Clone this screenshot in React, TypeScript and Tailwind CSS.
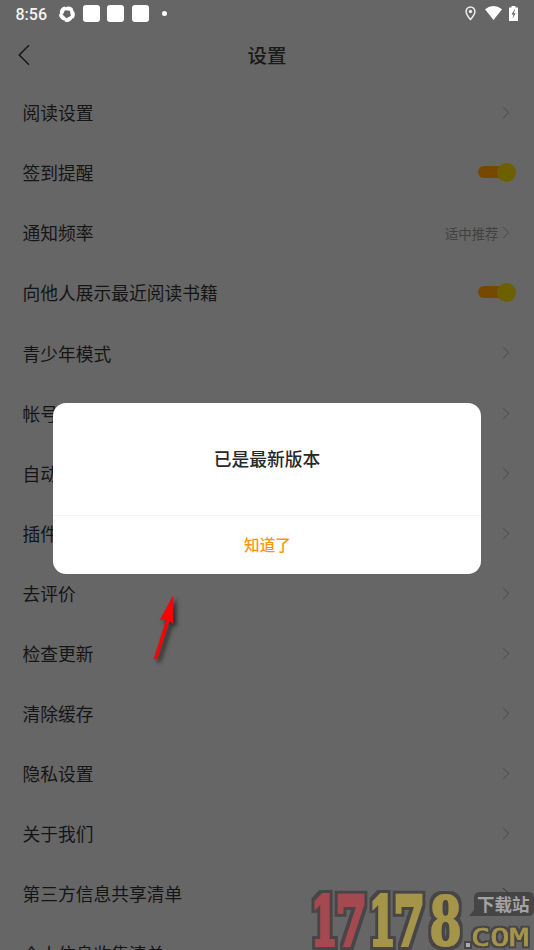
import React from 'react';

type Row = { label: string; toggle?: boolean; value?: string };

const rows: Row[] = [
  { label: '阅读设置' },
  { label: '签到提醒', toggle: true },
  { label: '通知频率', value: '适中推荐' },
  { label: '向他人展示最近阅读书籍', toggle: true },
  { label: '青少年模式' },
  { label: '帐号与安全' },
  { label: '自动续费' },
  { label: '插件管理' },
  { label: '去评价' },
  { label: '检查更新' },
  { label: '清除缓存' },
  { label: '隐私设置' },
  { label: '关于我们' },
  { label: '第三方信息共享清单' },
  { label: '个人信息收集清单' },
];

const bladeAngles = [22, 94, 166, 238, 310];

function StatusBar() {
  return (
    <header className="flex h-[27px] shrink-0 items-center pl-[15.5px] pr-[16px] text-white">
      <span className="w-[43.5px] pt-[2px] font-['Roboto',sans-serif] text-[16px] font-medium leading-none text-[#f4f4f4]">8:56</span>
      <svg className="h-4 w-4" viewBox="0 0 16 16" fill="#fff">
        {bladeAngles.map((angle) => (
          <path key={angle} transform={`rotate(${angle} 8 8)`} d="M3 3.600Q4.800.200 8.500.100 11 .200 12.200 1.500 11.500 3.800 9 4.200L4.600 5.300Q3.300 5 3 3.600Z" />
        ))}
      </svg>
      <div className="ml-2 flex gap-[7.4px]">
        <i className="h-[17px] w-[17px] rounded-[3px] bg-white" />
        <i className="h-[17px] w-[17px] rounded-[3px] bg-white" />
        <i className="h-[17px] w-[17px] rounded-[3px] bg-white" />
      </div>
      <i className="ml-[13px] h-[5px] w-[5px] rounded-full bg-white" />
      <div className="-mt-px ml-auto flex items-center">
        <svg className="h-[15px] w-[11px]" viewBox="0 0 11 15">
          <path d="M5.500 1a4.400 4.400 0 0 0-4.400 4.500C1.100 8.600 5.500 13.500 5.500 13.500S9.900 8.600 9.900 5.500A4.400 4.400 0 0 0 5.500 1Z" fill="none" stroke="#eee" strokeWidth="1.500" />
          <circle cx="5.500" cy="5.500" r="1.700" fill="#eee" />
        </svg>
        <svg className="ml-[9px] h-[14px] w-[17px]" viewBox="0 0 17 14">
          <path d="M0 3.200Q8.500-3 17 3.200L8.500 14Z" fill="#fff" />
        </svg>
        <svg className="ml-[7px] h-[15px] w-[9px]" viewBox="0 0 9 15">
          <path d="M2.500 0h4v1.500H9V15H0V1.500h2.500Z" fill="#fff" />
          <path d="M5.500 3.500 2.500 8.500h2L3.500 12.500 6.700 7.300H4.700L6 3.500Z" fill="#666" />
        </svg>
      </div>
    </header>
  );
}

function Chevron() {
  return (
    <svg className="h-[13px] w-2" viewBox="0 0 8 13">
      <path d="M1.200 1 6.800 6.500 1.200 12" fill="none" stroke="#484848" strokeWidth="1" />
    </svg>
  );
}

function Toggle() {
  return (
    <span className="flex h-[19px] w-[38px] items-center">
      <i className="h-3 w-[28px] rounded-full bg-[#754900]" />
      <i className="-ml-[9px] h-[19px] w-[19px] shrink-0 rounded-full bg-[#6d6000]" />
    </span>
  );
}

function SettingRow({ label, toggle, value }: Row) {
  return (
    <li className="flex h-[60.1px] shrink-0 items-center justify-between pl-[22.5px]">
      <span className="-mt-[1.2px] text-[17.75px] text-[#151515]">{label}</span>
      {toggle ? (
        <span className="-mt-[2px] mr-[18.5px]"><Toggle /></span>
      ) : (
        <span className="-mt-[1px] mr-[24px] flex items-center gap-[3.5px]">
          {value && <span className="text-[13.400px] leading-4 text-[#414141]">{value}</span>}
          <Chevron />
        </span>
      )}
    </li>
  );
}

function Watermark() {
  return (
    <svg className="absolute bottom-0 right-0 h-[70px] w-[234px]" viewBox="300 880 234 70">
      <defs>
        <filter id="outline" x="-10%" y="-10%" width="120%" height="120%">
          <feMorphology in="SourceAlpha" operator="dilate" radius="3" result="edge" />
          <feFlood floodColor="#464546" />
          <feComposite in2="edge" operator="in" result="border" />
          <feMerge><feMergeNode in="border" /><feMergeNode in="SourceGraphic" /></feMerge>
        </filter>
        <filter id="thinOutline" x="-10%" y="-20%" width="120%" height="140%">
          <feMorphology in="SourceAlpha" operator="dilate" radius="2" result="edge" />
          <feFlood floodColor="#464546" />
          <feComposite in2="edge" operator="in" result="border" />
          <feMerge><feMergeNode in="border" /><feMergeNode in="SourceGraphic" /></feMerge>
        </filter>
      </defs>
      <g fontFamily="DejaVu Serif, serif" fontWeight="700" fontSize="68" filter="url(#outline)" strokeWidth="4">
        <g fill="#a34a50" stroke="#a34a50">
          <text transform="translate(311 945) scale(.56 1)">1</text>
          <text transform="translate(335.500 945) scale(.66 1)">7</text>
        </g>
        <g fill="#a4954b" stroke="#a4954b">
          <text transform="translate(369 945) scale(.56 1)">1</text>
          <text transform="translate(393.500 945) scale(.66 1)">7</text>
          <text transform="translate(429.500 945) scale(.68 1)" strokeWidth="2">8</text>
        </g>
      </g>
      <g fontFamily="DejaVu Sans Mono, monospace" filter="url(#thinOutline)">
        <rect x="466" y="943" width="4" height="4" fill="#aaa" />
        <text transform="translate(471 946) scale(1.280 1)" fontSize="25" fill="#a4954b" stroke="#a4954b" strokeWidth=".6">COM</text>
      </g>
      <path d="M480 892h48q6 0 6 6v12q0 6-6 6h-59l5-6V898q0-6 6-6Z" fill="#464545" />
      <path d="m503 888 6 6-6 6" fill="none" stroke="#3b3b3b" />
      <text x="477" y="911" fontSize="17.500" fontWeight="700" fontFamily="Noto Sans CJK SC, sans-serif" fill="#a3a3a3">下载站</text>
    </svg>
  );
}

export default function App() {
  return (
    <div className="relative flex h-[950px] w-[534px] flex-col overflow-hidden bg-[#666] font-['Noto_Sans_CJK_SC',sans-serif]">
      <StatusBar />
      <nav className="grid h-[56px] shrink-0 grid-cols-[1fr_auto_1fr] items-center">
        <svg className="ml-[18px] h-[22px] w-3" viewBox="0 0 12 22">
          <path d="M11 1.200 1.200 11 11 20.800" fill="none" stroke="#181818" strokeWidth="1.500" />
        </svg>
        <h1 className="text-[19.500px] font-medium text-[#191919]">设置</h1>
      </nav>
      <ul className="flex flex-col">
        {rows.map((row) => <SettingRow key={row.label} {...row} />)}
      </ul>
      <section role="dialog" className="absolute left-[53px] top-[403px] flex h-[171px] w-[428px] flex-col rounded-[13px] bg-white">
        <h2 className="flex h-[113px] items-center justify-center border-b border-[#f3f3f3] pb-[2px] text-[17.750px] font-medium text-[#282828]">已是最新版本</h2>
        <button className="flex-1 pl-px text-[15.600px] font-medium text-[#ff9410]">知道了</button>
      </section>
      <svg className="absolute left-[140px] top-[585px] h-[85px] w-[50px] drop-shadow-[3px_3px_2px_rgba(0,0,0,0.6)]" viewBox="0 0 50 85">
        <path d="M33 11 20 35l6.500-1L14 73.500l3 1L29.500 36l3.500 3Z" fill="#f00" stroke="#b52020" strokeWidth=".5" />
      </svg>
      <Watermark />
    </div>
  );
}
